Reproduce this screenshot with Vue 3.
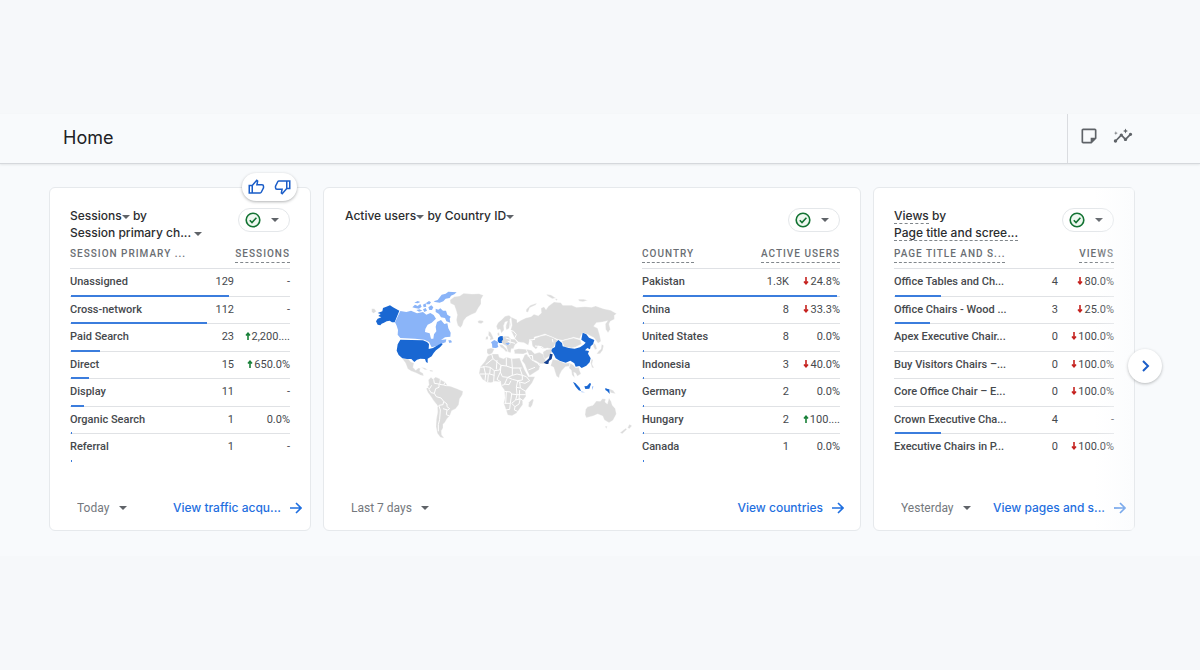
<script setup>
import { ref } from "vue";

let cards = ref([
  {
    id: "sessions",
    dim: "SESSION PRIMARY ...",
    metric: "SESSIONS",
    range: "Today",
    link: "View traffic acqu...",
    rows: [
      { name: "Unassigned", value: "129", change: "-", bar: 72 },
      { name: "Cross-network", value: "112", change: "-", bar: 62 },
      { name: "Paid Search", value: "23", change: "2,200....", dir: "up", bar: 13 },
      { name: "Direct", value: "15", change: "650.0%", dir: "up", bar: 8 },
      { name: "Display", value: "11", change: "-", bar: 6 },
      { name: "Organic Search", value: "1", change: "0.0%", bar: 0.5 },
      { name: "Referral", value: "1", change: "-", bar: 0.5 },
    ],
  },
  {
    id: "countries",
    dim: "COUNTRY",
    dimHint: true,
    metric: "ACTIVE USERS",
    range: "Last 7 days",
    link: "View countries",
    rows: [
      { name: "Pakistan", value: "1.3K", change: "24.8%", dir: "down", bar: 98 },
      { name: "China", value: "8", change: "33.3%", dir: "down", bar: 0.5 },
      { name: "United States", value: "8", change: "0.0%", bar: 0.5 },
      { name: "Indonesia", value: "3", change: "40.0%", dir: "down", bar: 0.5 },
      { name: "Germany", value: "2", change: "0.0%", bar: 0.5 },
      { name: "Hungary", value: "2", change: "100....", dir: "up", bar: 0.5 },
      { name: "Canada", value: "1", change: "0.0%", bar: 0.5 },
    ],
  },
  {
    id: "views",
    dim: "PAGE TITLE AND S...",
    dimHint: true,
    metric: "VIEWS",
    range: "Yesterday",
    link: "View pages and s...",
    rows: [
      { name: "Office Tables and Ch...", value: "4", change: "80.0%", dir: "down", bar: 21 },
      { name: "Office Chairs - Wood ...", value: "3", change: "25.0%", dir: "down", bar: 16 },
      { name: "Apex Executive Chair...", value: "0", change: "100.0%", dir: "down", bar: 0 },
      { name: "Buy Visitors Chairs –...", value: "0", change: "100.0%", dir: "down", bar: 0 },
      { name: "Core Office Chair – E...", value: "0", change: "100.0%", dir: "down", bar: 0 },
      { name: "Crown Executive Cha...", value: "4", change: "-", bar: 21 },
      { name: "Executive Chairs in P...", value: "0", change: "100.0%", dir: "down", bar: 0 },
    ],
  },
]);
</script>
<template>
  <div class="page">
    <div class="app">
      <header class="topbar">
        <h1>Home</h1>
        <div class="tools">
          <button class="tool" aria-label="Notes">
            <svg width="20" height="20" viewBox="0 0 24 24">
              <path
                d="M19 5v9h-5v5H5V5h14m0-2H5c-1.100 0-2 .9-2 2v14c0 1.100.9 2 2 2h10l6-6V5c0-1.100-.9-2-2-2z"
              />
            </svg>
          </button>
          <button class="tool" aria-label="Insights">
            <svg width="20" height="20" viewBox="0 0 24 24">
              <path
                d="M21 8c-1.450 0-2.260 1.440-1.930 2.510l-3.550 3.560c-.3-.09-.74-.09-1.040 0l-2.550-2.550C12.270 10.450 11.460 9 10 9c-1.450 0-2.270 1.440-1.930 2.520l-4.560 4.550C2.440 15.740 1 16.550 1 18c0 1.100.9 2 2 2 1.450 0 2.260-1.440 1.930-2.510l4.550-4.560c.3.09.74.09 1.040 0l2.550 2.550C12.730 16.550 13.540 18 15 18c1.450 0 2.270-1.440 1.930-2.520l3.560-3.550C21.560 12.260 23 11.450 23 10c0-1.100-.9-2-2-2z"
              />
              <path d="M15 9l.94-2.070L18 6l-2.060-.93L15 3l-.92 2.070L12 6l2.080.93zM3.500 11L4 9l2-.5L4 8l-.5-2L3 8l-2 .5L3 9z" />
            </svg>
          </button>
        </div>
      </header>

      <main class="cards">
        <section v-for="card in cards" :key="card.id" class="card" :class="card.id">
          <div v-if="card.id == 'sessions'" class="feedback">
            <button aria-label="Helpful">
              <svg width="18" height="18" viewBox="0 0 24 24">
                <path
                  d="M3 10h4v10H3zM7 10l6-7 1.200 1.100L13.200 9H20a2 2 0 0 1 2 2v2l-3 6a1.800 1.800 0 0 1-1.600 1H7z"
                />
              </svg>
            </button>
            <button aria-label="Not helpful">
              <svg class="flip" width="18" height="18" viewBox="0 0 24 24">
                <path
                  d="M3 10h4v10H3zM7 10l6-7 1.200 1.100L13.200 9H20a2 2 0 0 1 2 2v2l-3 6a1.800 1.800 0 0 1-1.600 1H7z"
                />
              </svg>
            </button>
          </div>

          <div class="head">
            <h2 v-if="card.id == 'sessions'">
              <button class="pick">Sessions<i class="caret"></i></button> by<br />
              <button class="pick">Session primary ch... <i class="caret"></i></button>
            </h2>
            <h2 v-else-if="card.id == 'countries'">
              <button class="pick">Active users<i class="caret"></i></button> by
              <button class="pick">Country ID<i class="caret"></i></button>
            </h2>
            <h2 v-else><span class="hint">Views</span> by<br /><span class="hint">Page title and scree...</span></h2>
            <button class="status" aria-label="Data quality">
              <svg width="18" height="18" viewBox="0 0 18 18">
                <circle cx="9" cy="9" r="6.800" />
                <path d="M5.800 9.300l2.200 2.200 4.400-4.800" />
              </svg>
              <i class="caret"></i>
            </button>
          </div>

          <div class="body">
            <svg v-if="card.id == 'countries'" class="map" viewBox="0 0 810 510" role="img" aria-label="World map">
              <g class="land">
                <path d="M20 86l8 0 6 8-8 6-6-4z" />
                <path
                  d="M255 60L268 50 284 48 296 40 320 42 342 41 355 46 348 58 348 72 340 84 332 98 318 104 304 112 296 122 292 136 286 143 278 136 274 120 277 104 273 90 268 76 256 70z"
                />
                <path d="M338 124l6-3 9 1 3 4-8 5-8-2z" />
                <path
                  d="M112 236L130 237 138 246 147 249 144 262 152 271 160 264 166 265 164 274 174 280 176 288 166 285 152 278 138 273 128 266 122 250z"
                />
                <path d="M168 262l12 2 8 5-8 0zM194 270l8 1 2 4-9-1z" />
                <path
                  d="M190 300L198 292 204 298 212 291 224 296 232 302 240 306 247 316 260 320 276 326 294 334 292 344 284 356 281 374 272 386 260 392 255 406 246 416 240 427 234 433 234 444 229 452 230 465 238 475 226 472 217 460 213 440 214 418 218 396 217 376 206 362 196 347 188 336 184 326 192 314z"
                />
              </g>
              <path
                class="edge"
                d="M206 298l2 12 14 2 0 10-10 4-4 14-10-2-6-10M226 297l-2 16 12 2 4-8M236 315l8 2 12 0M208 340l6 10 14 4 8 10-2 10-12 2-6 6M236 364l10 8 0 8 8 6-6 4-14-4M222 378l4 12-2 28-4 16 0 20M246 390l-2 14 10 4M186 322l8 4 6-10"
              />
              <path
                class="mid"
                d="M75 76L84 82 103 92 89 127 81 127 74 122 65 124 57 128 50 131 46 136 38 134 33 124 38 116 49 112 40 108 47 102 38 99 52 94 54 84 64 80z"
              />
              <g class="light">
                <path
                  d="M106 93L124 96 138 92 156 100 174 96 184 104 196 99 206 105 213 116 200 128 188 134 181 147 180 156 194 160 198 176 205 176 207 163 214 154 212 140 216 126 228 120 238 132 247 130 250 145 257 158 256 170 240 172 228 180 244 178 242 187 228 192 214 198 200 202 192 186 178 179 150 176 106 174 98 164 99 150 95 137 90 127z"
                />
                <path d="M142 82l8-8 8 4 8-6 4 8-8 6-12-2zM148 68l10-5 8 3-8 4zM174 74l8-4 2 10-8 2zM174 88l8-4 4 8-8 4zM154 90l10-2 8 4-10 3z" />
                <path
                  d="M206 64l12-4 12-16 12-3 8-6 25 2-7 6-10 4-4 7-12 2-7 8-11 4-14-2zM184 68l8-5 6 4-4 6-10 0z"
                />
                <path
                  d="M212 86l8 3 6-4 8 7 9 0 4 12 10 6-3 6 2 12-12-4-4-10-12-2-6-10-10-6zM190 82l9-6 6 6-4 8-8 0zM196 110l8-2 4 8-8 2zM250 181l8 0 3 6-8 2z"
                />
              </g>
              <path
                class="mid"
                d="M106 179L174 181 186 186 192 192 191 207 204 204 218 196 229 190 233 193 225 202 213 211 206 219 200 229 188 236 188 249 183 246 180 237 166 236 156 239 148 246 139 237 126 237 112 235 101 225 95 212 98 193z"
              />
              <g class="land" transform="translate(330 0)">
                <path d="M38 228L52 222 70 222 73 232 86 236 94 231 110 236 134 234 140 249 149 270 160 290 180 290 171 309 158 325 151 333 153 349 143 362 143 374 133 388 124 400 111 407 98 405 92 386 86 370 90 354 88 330 79 317 77 306 60 304 48 308 36 307 22 298 12 280 16 260 30 244z" />
                <path d="M162 367l10-10 4 2-4 16-6 8-6-4z" />
                <path d="M36 207l12-3 10 3-6 13-10 4-6-5z" />
                <path d="M41 154l6 3 6 12 3 8-11 4 1-10-6-5zM33 170l6-1 0 9-7 1z" />
                <path
                  d="M64 139L69 128 80 119 90 109 102 106 109 112 104 119 108 133 104 144 94 150 92 138 98 124 90 126 86 138 87 150 79 160 75 147 68 150zM67 160l5-3 2 9-5 2z"
                />
                <path d="M72 193l10 1 12 12 5 8-6 1-8-9-8-4zM86 169l14 0 8 8 12 1 8 10-8 6-5 12-6 0-2 12-8-2-5-18-10-5-9-12z" />
                <path
                  d="M108 111L126 119 126 128 138 121 152 114 168 110 177 103 190 107 199 99 198 85 207 80 213 89 220 79 237 66 258 68 263 76 290 76 304 82 330 80 350 82 362 78 385 86 407 91 425 101 418 106 418 118 406 124 402 132 406 148 399 158 392 148 391 132 398 122 382 126 364 128 356 139 368 145 374 165 378 184 369 190 357 173 337 163 322 158 314 176 296 172 274 178 262 181 247 178 226 169 210 162 194 167 178 171 175 185 164 180 160 196 147 188 130 186 119 175 113 162 107 150 111 136z"
                />
                <path d="M154 88l12-12 20-7-4 6-18 8-5 14-6-2zM214 43l14 2 14 9-10 2-14-8zM240 56l8 1-4 5zM310 58l16 0 12 3-14 4-12-2z" />
                <path d="M117 209l14-3 22 2 4 9-12 5-26-1z" />
                <path d="M149 224l6-2 14 17 12 8 15 8-4 14-28 18-7-14-8-21-8-10z" />
                <path d="M154 208l15 3 10 10 14-4 14 7 4 13 2 14-18 0-12-8-14-4z" />
                <path d="M170 182l12-8 16-6 15-3 22 8 14 9-9 10-3 8-8 7-12-3-12 3-14-10-8 11-11-10z" />
                <path d="M204 216l10-7 16-2 0 10-10 14-10 7-5-10z" />
                <path d="M260 183l14-4 22-5 20 6 4 12-18 9-12 3-22-3z" />
                <path d="M233 238l16 3 20 9 16-1-2 10-12 1-11 12-6 12-2 10-8-6-8-26-9-5z" />
                <path d="M286 250l8 4 8 9 10-1 2 10 4 9-11 8-5-10-6-2 3 16-8-8-2-14-7-7z" />
                <path d="M355 188l7 6 4 12-6 3-5-10zM380 192l6 5-3 14-8 10-10 1 6-9 7-6zM350 236l4 4-3 12 6 12-6-1-4-14z" />
                <path d="M402 326l12 5 8 10-7-1-8-2z" />
                <path
                  d="M332 388L338 380 354 376 364 363 376 364 382 356 392 357 390 366 397 372 402 354 408 364 412 376 421 386 424 402 414 421 402 428 388 420 383 408 368 402 354 408 334 413 330 404z"
                />
                <path d="M390 439l7 0-3 7zM463 433l8 4-8 9-5-3zM452 445l4 3-14 13-7-3z" />
              </g>
              <g class="edge" transform="translate(330 0)">
                <path
                  d="M50 222l4 14-22 18M54 236l24 20 16 2 0-26M78 256l-4 14-16 2-12-10-14-2-16 2M110 236l2 28 28 0M112 264l0 22-14 6-16-2-6-14 2-20M94 258l18 6M58 272l-2 34M46 262l-2 20 14 4M14 282l30 0M32 284l-2 18M40 284l-2 22M76 276l-10 22 12 8M98 292l-10 22-8 2M98 292l14 6 16 4 14-2 0-14-8-22M112 286l14-4 16 4M142 286l12 4 10 12-14 8-16-4-6-4M128 302l-4 20 2 22M88 312l14 2 6-12M126 344l-16-2-4-6-18-2M134 306l2 18 16 10M124 322l12 2M126 344l26 0M110 342l-4 28-18 0M126 344l-4 16-12 10M122 360l14-4 8 6M110 370l10 10 12-8 4-16M106 370l-2 18-12 2M120 380l-2 10 10 4M26 258l6 26M66 240l-2 28M134 330l-2 30M94 336l-2 34"
                />
                <path d="M104 150l12 4 8 10-6 12M92 174l14 4-2 16M98 184l22 6M86 136l8 2M162 180l18-2M232 177l2 10M180 198l20 2 12 10M158 228l14-2 2 16M160 270l20-8M190 252l4 6M106 122l-2 26" />
              </g>
              <g transform="translate(330 0)">
                <path class="light" d="M48 187l10-7 11 6-1 8 2 7-7 3-11-1-1-11z" />
                <path class="mid" d="M69 173l6-4 8-1 1 11-4 5 1 5-9 0-4-6z" />
                <path class="light" d="M91 190l10-2 4 3-8 4z" />
                <path
                  class="mid"
                  d="M250 180L261 189 263 199 281 204 299 206 315 202 326 194 332 188 319 179 323 158 334 163 342 173 358 180 354 193 347 199 345 208 337 204 330 211 342 213 339 221 347 235 344 247 334 257 320 264 313 258 302 260 298 250 286 242 272 248 254 242 242 235 236 222 229 213 231 206 240 201 242 188z"
                />
                <path class="mid" d="M294 306l7 3 13 14 4 10-7-2-9-11zM328 319l8-1 9-10 3 4-5 14-12 1zM391 324l7 3 5 1 1 14-7-8-6-4z" />
                <path class="light" d="M351 320l4-2-2 12zM318 334l12 3-10 0z" />
                <path class="dark" d="M225 221l8 2-3 14-8 6-2 9-6 0-8-4 8-6 8-7z" />
              </g>
            </svg>

            <table>
              <thead>
                <tr>
                  <th scope="col">
                    <span :class="{ hint: card.dimHint }">{{ card.dim }}</span>
                  </th>
                  <th scope="col" colspan="2">
                    <span class="hint">{{ card.metric }}</span>
                  </th>
                </tr>
              </thead>
              <tbody>
                <tr v-for="row in card.rows" :key="row.name">
                  <th scope="row">
                    {{ row.name }}
                    <span v-if="row.bar" class="bar" :style="{ width: row.bar + '%' }"></span>
                  </th>
                  <td class="value">{{ row.value }}</td>
                  <td class="change">
                    <svg v-if="row.dir" :class="row.dir" width="6" height="8" viewBox="0 0 6 8">
                      <path d="M3 8V2M1 3.500l2-2.300 2 2.300" /></svg
                    >{{ row.change }}
                  </td>
                </tr>
              </tbody>
            </table>
          </div>

          <div class="foot">
            <div class="range">
              <select :aria-label="'Date range for ' + card.id">
                <option>{{ card.range }}</option>
              </select>
              <i class="caret"></i>
            </div>
            <a href="#">
              {{ card.link }}
              <svg width="12" height="12" viewBox="0 0 12 12">
                <path d="M0 6h11M6 1l5 5-5 5" />
              </svg>
            </a>
          </div>
        </section>

        <button class="next" aria-label="Next cards">
          <svg width="12" height="12" viewBox="0 0 12 12">
            <path d="M4 1l5 5-5 5" />
          </svg>
        </button>
      </main>
    </div>
  </div>
</template>
<style>
body {
  background: #f6f8fa;
}
</style>
<style scoped>
.page {
  padding: 114px 0;
  font-family: Roboto, sans-serif;
  font-size: 11px;
  color: #46494d;
}
.app {
  background: #f8fafc;
  padding-bottom: 25px;
}
button {
  font: inherit;
  color: inherit;
  background: none;
  border: 0;
  padding: 0;
  cursor: pointer;
}
svg {
  display: block;
  flex: none;
}

.topbar {
  display: flex;
  justify-content: space-between;
  height: 49px;
  padding-left: 63px;
  border-bottom: 1px solid #d5d8dc;
  box-shadow: 0 1px 2px rgba(60, 64, 67, 0.1);
}
h1 {
  margin: 0;
  font: 400 18px/48px Inter, sans-serif;
  color: #202124;
}
.tools {
  display: flex;
  align-items: center;
  gap: 14px;
  padding: 0 67px 6px 11px;
  border-left: 1px solid #dadce0;
}
.tool svg {
  fill: #5f6368;
}

.cards {
  position: relative;
  display: grid;
  grid-template-columns: 262fr 538fr 262fr;
  gap: 12px;
  padding: 23px 65px 0 49px;
}
.card {
  position: relative;
  display: flex;
  flex-direction: column;
  min-width: 0;
  padding: 19px 20px 10px;
  background: #fff;
  border: 1px solid #e6e9ec;
  border-radius: 6px;
}
.views::after {
  content: "";
  position: absolute;
  inset: 0 0 0 auto;
  width: 40px;
  background: linear-gradient(to right, rgba(248, 250, 252, 0), rgba(248, 250, 252, 0.6));
  pointer-events: none;
}

.feedback {
  position: absolute;
  top: -15px;
  right: 13px;
  display: flex;
  gap: 9px;
  padding: 5px;
  background: #fff;
  border-radius: 14px;
  box-shadow: 0 1px 3px rgba(60, 64, 67, 0.4);
}
.feedback svg {
  fill: none;
  stroke: #1a5dc8;
  stroke-width: 2;
}
.feedback .flip {
  transform: rotate(180deg);
}

.head {
  display: flex;
  justify-content: space-between;
  align-items: flex-start;
  height: 36px;
}
h2 {
  margin: 0 0 0 1px;
  font: 500 12px/17px Inter, sans-serif;
  color: #2b2d30;
}
.views h2,
.sessions h2 {
  margin-left: 0;
}
.caret {
  display: inline-block;
  border: 4px solid transparent;
  border-top: 4px solid #5f6368;
  border-bottom: 0;
  vertical-align: middle;
}
.hint {
  border-bottom: 1px dashed #80868b;
}
.status {
  display: flex;
  align-items: center;
  gap: 9px;
  height: 24px;
  margin-top: 1px;
  padding: 0 10px 0 5px;
  border: 1px solid #e4e7ea;
  border-radius: 12px;
}
.status svg {
  fill: #eef8f0;
  stroke: #137333;
  stroke-width: 1.6;
}

.body {
  display: flex;
  justify-content: space-between;
}
.map {
  width: 270px;
  height: 170px;
  margin: 37px 0 0 21px;
}
.land {
  fill: #dcdcdc;
  stroke: #fff;
  stroke-width: 1;
}
.edge {
  fill: none;
  stroke: #fff;
  stroke-width: 3;
}
.mid {
  fill: #1967d2;
}
.light {
  fill: #8ab4f8;
}
.dark {
  fill: #174392;
}

table {
  position: relative;
  width: 100%;
  border-collapse: separate;
  border-spacing: 0;
}
.countries table {
  width: 198px;
}
tr {
  position: relative;
}
th,
td {
  padding: 0;
  text-align: left;
  font-weight: 500;
  white-space: nowrap;
}
thead th {
  height: 25px;
  vertical-align: top;
  font-size: 10px;
  letter-spacing: 1px;
  line-height: 22px;
  color: #6a6e73;
  border-bottom: 1px solid #dfe1e5;
}
thead .hint {
  padding-bottom: 3px;
}
thead th:last-child {
  text-align: right;
}
tbody th,
tbody td {
  height: 25px;
  padding-bottom: 2px;
  border-bottom: 1px solid #e0e2e5;
}
tbody tr:nth-child(even) > * {
  height: 24px;
}
tbody tr:last-child > * {
  border-bottom-color: transparent;
}
.bar {
  position: absolute;
  left: 1px;
  bottom: 0;
  height: 2px;
  background: #3b7ddd;
}
.value {
  text-align: right;
  font-size: 11px;
  font-weight: 400;
}
.change {
  width: 56px;
  text-align: right;
  font-weight: 400;
}
.countries .change {
  width: 51px;
}
.change svg {
  display: inline-block;
  margin-right: 1px;
  fill: none;
  stroke-width: 1.6;
}
.up {
  stroke: #188038;
}
.down {
  stroke: #c5221f;
  transform: rotate(180deg);
}

.foot {
  display: flex;
  justify-content: space-between;
  align-items: center;
  height: 24px;
  margin: 34px -12px 0 7px;
}
.countries .foot {
  margin-right: -4px;
}
.range {
  display: flex;
  align-items: center;
  gap: 9px;
}
select {
  appearance: none;
  font: 400 12px/20px Roboto, sans-serif;
  color: #74787d;
  background: none;
  border: 0;
  padding: 0;
}
a {
  display: flex;
  align-items: center;
  gap: 9px;
  font: 500 12px/20px Inter, sans-serif;
  color: #1f6fe0;
  text-decoration: none;
}
a svg,
.next svg {
  fill: none;
  stroke: currentColor;
  stroke-width: 1.6;
}
.next svg {
  stroke-width: 2;
}

.next {
  position: absolute;
  top: 185px;
  right: 38px;
  display: flex;
  align-items: center;
  justify-content: center;
  width: 34px;
  height: 34px;
  color: #1a5dc8;
  background: #fff;
  border-radius: 50%;
  box-shadow: 0 1px 3px rgba(60, 64, 67, 0.35);
}
</style>
